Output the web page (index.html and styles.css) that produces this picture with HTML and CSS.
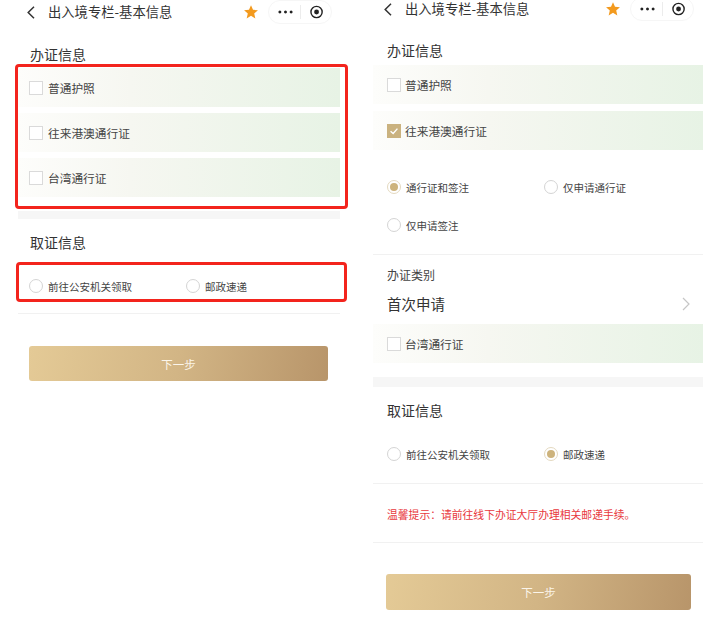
FILE: index.html
```html
<!DOCTYPE html>
<html>
<head>
    <meta charset="utf-8">
    <title>出入境专栏-基本信息</title>
    <link rel="stylesheet" href="styles.css">
</head>
<body>
    <div class="page">
        <!-- first screen: nothing picked yet -->
        <div class="phone phone-left">
            <div class="navbar">
                <svg class="back" viewBox="0 0 8 13"><path d="M7 0.8 L1.2 6.5 L7 12.2"/></svg>
                <span class="nav-title">出入境专栏-基本信息</span>
                <svg class="star" viewBox="0 0 24 24"><path d="M12 1.8l3 6.9 7.4.7-5.6 4.9 1.7 7.3L12 17.8l-6.5 3.8 1.7-7.3-5.6-4.9 7.4-.7z"/></svg>
                <div class="capsule">
                    <svg class="dots" viewBox="0 0 16 4"><circle cx="2" cy="2" r="1.6"/><circle cx="8" cy="2" r="1.6"/><circle cx="14" cy="2" r="1.6"/></svg>
                    <span class="capsule-line"></span>
                    <svg class="target" viewBox="0 0 14 14"><circle class="ring" cx="7" cy="7" r="6"/><circle cx="7" cy="7" r="2.6"/></svg>
                </div>
            </div>

            <div class="section-title">办证信息</div>
            <div class="mark mark-types">
                <label class="check-row"><span class="checkbox"></span>普通护照</label>
                <label class="check-row"><span class="checkbox"></span>往来港澳通行证</label>
                <label class="check-row"><span class="checkbox"></span>台湾通行证</label>
            </div>
            <div class="band"></div>

            <div class="section-title section-pick">取证信息</div>
            <div class="mark mark-pick">
                <div class="radio-row">
                    <label class="radio-item"><span class="radio"></span>前往公安机关领取</label>
                    <label class="radio-item"><span class="radio"></span>邮政速递</label>
                </div>
            </div>
            <div class="divider"></div>

            <div class="btn">下一步</div>
        </div>

        <!-- second screen: HK/Macau pass + post -->
        <div class="phone phone-right">
            <div class="navbar">
                <svg class="back" viewBox="0 0 8 13"><path d="M7 0.8 L1.2 6.5 L7 12.2"/></svg>
                <span class="nav-title">出入境专栏-基本信息</span>
                <svg class="star" viewBox="0 0 24 24"><path d="M12 1.8l3 6.9 7.4.7-5.6 4.9 1.7 7.3L12 17.8l-6.5 3.8 1.7-7.3-5.6-4.9 7.4-.7z"/></svg>
                <div class="capsule">
                    <svg class="dots" viewBox="0 0 16 4"><circle cx="2" cy="2" r="1.6"/><circle cx="8" cy="2" r="1.6"/><circle cx="14" cy="2" r="1.6"/></svg>
                    <span class="capsule-line"></span>
                    <svg class="target" viewBox="0 0 14 14"><circle class="ring" cx="7" cy="7" r="6"/><circle cx="7" cy="7" r="2.6"/></svg>
                </div>
            </div>

            <div class="section-title">办证信息</div>
            <div class="type-list">
                <label class="check-row"><span class="checkbox"></span>普通护照</label>
                <label class="check-row"><span class="checkbox checked"><svg viewBox="0 0 14 14"><path d="M3 7.2 L6 10 L11 4.2"/></svg></span>往来港澳通行证</label>
            </div>

            <div class="option-list">
                <div class="radio-row">
                    <label class="radio-item"><span class="radio on"></span>通行证和签注</label>
                    <label class="radio-item"><span class="radio"></span>仅申请通行证</label>
                </div>
                <div class="radio-row">
                    <label class="radio-item"><span class="radio"></span>仅申请签注</label>
                </div>
            </div>
            <div class="divider divider-type"></div>

            <div class="field-label">办证类别</div>
            <div class="select-row">
                <span>首次申请</span>
                <svg class="chevron" viewBox="0 0 8 14"><path d="M1 1 L7 7 L1 13"/></svg>
            </div>
            <label class="check-row row-tw"><span class="checkbox"></span>台湾通行证</label>
            <div class="band"></div>

            <div class="section-title section-pick">取证信息</div>
            <div class="radio-row pick-row">
                <label class="radio-item"><span class="radio"></span>前往公安机关领取</label>
                <label class="radio-item"><span class="radio on"></span>邮政速递</label>
            </div>
            <div class="divider divider-pick"></div>

            <div class="tip">温馨提示：请前往线下办证大厅办理相关邮递手续。</div>
            <div class="divider divider-tip"></div>

            <div class="btn">下一步</div>
        </div>
    </div>
</body>
</html>
```

FILE: styles.css
```css
* {
    box-sizing: border-box;
}
body {
    margin: 0;
    background: #fff;
    color: #333;
    font-family: "Noto Sans CJK SC", "Noto Sans", sans-serif;
}
.page {
    display: flex;
    width: 712px;
    height: 622px;
    overflow: hidden;
}
.phone {
    display: flex;
    flex-direction: column;
}
.phone-left {
    width: 322px;
    margin-left: 18px;
    padding-top: 3px;
}
.phone-right {
    width: 330px;
    margin-left: 33px;
}

/* nav bar */
.navbar {
    display: flex;
    align-items: center;
    height: 18px;
}
.phone-left .navbar {
    padding: 0 8px 0 9px;
}
.phone-right .navbar {
    padding: 0 9px 0 11px;
}
.back {
    width: 8px;
    height: 13px;
    flex-shrink: 0;
}
.back path {
    fill: none;
    stroke: #333;
    stroke-width: 1.5;
}
.nav-title {
    margin-left: 13px;
    font-size: 13.3px;
    line-height: 18px;
    color: #333;
    white-space: nowrap;
}
.star {
    width: 16px;
    height: 16px;
    margin-left: auto;
    margin-right: 9px;
    fill: #f39a1e;
}
.capsule {
    display: flex;
    align-items: center;
    flex-shrink: 0;
    width: 64px;
    height: 24px;
    padding: 0 8px 0 9px;
    border: 1px solid #f6f6f6;
    border-radius: 12px;
}
.dots {
    width: 16px;
    height: 4px;
    fill: #222;
}
.capsule-line {
    width: 1px;
    height: 14px;
    margin: 0 9px 0 7px;
    background: #ececec;
}
.target {
    width: 14px;
    height: 14px;
    fill: #222;
}
.target .ring {
    fill: none;
    stroke: #222;
    stroke-width: 1.5;
}

/* sections */
.section-title {
    font-size: 14px;
    line-height: 20px;
    color: #333;
}
.phone-left .section-title {
    margin-top: 23px;
    padding-left: 12px;
}
.phone-left .section-pick {
    margin-top: 13px;
}
.phone-right .section-title {
    margin-top: 22px;
    padding-left: 14px;
}
.phone-right .section-pick {
    margin-top: 13px;
}

.check-row {
    display: flex;
    align-items: center;
    height: 39px;
    padding-left: 11px;
    font-size: 11.7px;
    color: #444;
    background: linear-gradient(90deg, #fdfdfb 0%, #f6f7f1 35%, #e7f3e5 100%);
}
.phone-right .check-row {
    padding-left: 14px;
}
.checkbox {
    display: flex;
    align-items: center;
    justify-content: center;
    width: 14px;
    height: 14px;
    margin-right: 5px;
    border: 1px solid #dadada;
    background: #fff;
}
.phone-right .checkbox {
    margin-right: 4px;
}
.checkbox.checked {
    background: #cab27f;
    border-color: #cab27f;
}
.checkbox svg {
    width: 12px;
    height: 12px;
}
.checkbox svg path {
    fill: none;
    stroke: #fff;
    stroke-width: 1.6;
}

/* red highlight frames */
.mark {
    border: 3px solid #f3241d;
    border-radius: 4px;
}
.mark-types {
    display: flex;
    flex-direction: column;
    gap: 6px;
    margin: 0 -8px 0 -3px;
    padding: 1px 5px 9px 0;
}
.mark-pick {
    margin: 10px -7px 0 -2px;
    padding: 10px 0 2px 10px;
}

.band {
    height: 8px;
    margin-top: 2px;
    background: #f6f6f6;
}
.phone-right .band {
    height: 10px;
    margin-top: 14px;
}

.radio-row {
    display: flex;
    align-items: center;
    height: 22px;
}
.radio-item {
    display: flex;
    align-items: center;
    font-size: 10.5px;
    color: #444;
    white-space: nowrap;
}
.radio-item:first-child {
    width: 157px;
}
.radio {
    display: flex;
    align-items: center;
    justify-content: center;
    width: 14px;
    height: 14px;
    margin-right: 5px;
    border: 1px solid #d4d4d4;
    border-radius: 50%;
    background: #fff;
}
.radio.on {
    border-color: #e4d9c0;
}
.radio.on::after {
    content: "";
    width: 8px;
    height: 8px;
    border-radius: 50%;
    background: #cdb37c;
}

.divider {
    height: 1px;
    margin-top: 11px;
    background: #f1f1f1;
}

/* right screen details */
.type-list {
    display: flex;
    flex-direction: column;
    gap: 7px;
    margin-top: 5px;
}
.option-list {
    margin-top: 18px;
    padding-left: 14px;
}
.option-list .radio-row {
    height: 38px;
}
.divider-type {
    margin-top: 10px;
}
.field-label {
    margin-top: 11px;
    padding-left: 14px;
    font-size: 12px;
    line-height: 18px;
    color: #444;
}
.select-row {
    display: flex;
    align-items: center;
    justify-content: space-between;
    margin-top: 9px;
    padding: 0 13px 0 14px;
    font-size: 14.5px;
    line-height: 22px;
    color: #333;
}
.chevron {
    width: 8px;
    height: 14px;
}
.chevron path {
    fill: none;
    stroke: #c6c6c6;
    stroke-width: 1.2;
}
.row-tw {
    margin-top: 9px;
}
.pick-row {
    height: 20px;
    margin-top: 24px;
    padding-left: 14px;
}
.divider-pick {
    margin-top: 19px;
}
.tip {
    margin-top: 22px;
    padding-left: 14px;
    font-size: 10.8px;
    line-height: 16px;
    color: #e8383d;
    white-space: nowrap;
}
.divider-tip {
    margin-top: 20px;
}

.btn {
    display: flex;
    align-items: center;
    justify-content: center;
    height: 35px;
    border-radius: 3px;
    background: linear-gradient(100deg, #e4ca96 0%, #d2b585 50%, #b8956a 100%);
    color: #fbf5ea;
    font-size: 11.5px;
}
.phone-left .btn {
    margin: 32px 12px 0 11px;
}
.phone-right .btn {
    height: 36px;
    margin: 31px 12px 0 13px;
}
```
